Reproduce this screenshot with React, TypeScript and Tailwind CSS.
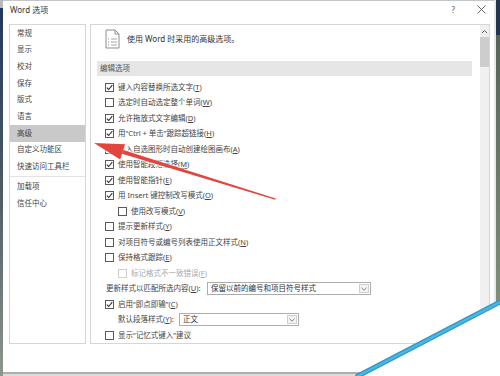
import type { ReactNode } from 'react'

type Opt = {
	label: string
	hotkey?: string
	checked?: boolean
	indent?: boolean
	disabled?: boolean
}

const navItems = ['常规', '显示', '校对', '保存', '版式', '语言', '高级', '自定义功能区', '快速访问工具栏']
const navItems2 = ['加载项', '信任中心']

const editOpts: Opt[] = [
	{ label: '键入内容替换所选文字', hotkey: 'T', checked: true },
	{ label: '选定时自动选定整个单词', hotkey: 'W' },
	{ label: '允许拖放式文字编辑', hotkey: 'D', checked: true },
	{ label: '用“Ctrl + 单击”跟踪超链接', hotkey: 'H', checked: true },
	{ label: '插入自选图形时自动创建绘图画布', hotkey: 'A' },
	{ label: '使用智能段落选择', hotkey: 'M', checked: true },
	{ label: '使用智能指针', hotkey: 'E', checked: true },
	{ label: '用 Insert 键控制改写模式', hotkey: 'O', checked: true },
	{ label: '使用改写模式', hotkey: 'V', indent: true },
	{ label: '提示更新样式', hotkey: 'Y' },
	{ label: '对项目符号或编号列表使用正文样式', hotkey: 'N' },
	{ label: '保持格式跟踪', hotkey: 'E' },
	{ label: '标记格式不一致错误', hotkey: 'F', indent: true, disabled: true },
]

function Label({ label, hotkey }: { label: string; hotkey?: string }) {
	if (!hotkey) return <span>{label}</span>
	return (
		<span>
			{label}(<span className="underline">{hotkey}</span>)
		</span>
	)
}

function CheckBox({ checked, disabled }: { checked?: boolean; disabled?: boolean }) {
	return (
		<div
			className={
				'w-[9px] h-[9px] border bg-white flex items-center justify-center shrink-0 ' +
				(disabled ? 'border-[#cfcfcf]' : 'border-[#5a5a5a]')
			}
		>
			{checked && (
				<svg width="7" height="7" viewBox="0 0 7 7">
					<path d="M0.8 3.6 L2.7 5.5 L6.3 1.2" fill="none" stroke="#333" strokeWidth="1.1" />
				</svg>
			)}
		</div>
	)
}

function OptRow({ opt }: { opt: Opt }) {
	return (
		<div className={'h-[15.5px] flex items-center gap-[4px] ' + (opt.indent ? 'pl-[27px]' : 'pl-[14px]')}>
			<CheckBox checked={opt.checked} disabled={opt.disabled} />
			<div className={'whitespace-nowrap ' + (opt.disabled ? 'text-[#a8a8a8]' : 'text-[#444]')}>
				<Label label={opt.label} hotkey={opt.hotkey} />
			</div>
		</div>
	)
}

function Select({ value, width }: { value: string; width: string }) {
	return (
		<div className={'h-[13px] border border-[#acacac] bg-white flex items-center pl-[3px] pr-[1px] shrink-0 ' + width}>
			<div className="flex-1 text-[#333] whitespace-nowrap leading-[11px]">{value}</div>
			<div className="w-[10px] h-[9px] border border-[#cfcfcf] bg-[#f3f3f3] flex items-center justify-center">
				<svg width="6" height="4" viewBox="0 0 6 4">
					<path d="M0.5 0.8 L3 3.2 L5.5 0.8" fill="none" stroke="#777" strokeWidth="0.9" />
				</svg>
			</div>
		</div>
	)
}

function DocIcon() {
	return (
		<svg width="15" height="20" viewBox="0 0 15 20">
			<path d="M1 1 H10 L14 5 V19 H1 Z" fill="#fff" stroke="#8d8d8d" strokeWidth="1" />
			<path d="M10 1 V5 H14" fill="none" stroke="#8d8d8d" strokeWidth="1" />
			<path d="M3 10 H4 M3 13 H4 M3 16 H4" stroke="#8d8d8d" strokeWidth="1" />
			<path d="M6 10 H12 M6 13 H12 M6 16 H12" stroke="#a5a5a5" strokeWidth="1" />
		</svg>
	)
}

function Overlay({ children }: { children: ReactNode }) {
	return (
		<svg className="absolute inset-0 pointer-events-none" width="500" height="376" viewBox="0 0 500 376">
			{children}
		</svg>
	)
}

export default function App() {
	return (
		<div className="relative w-[500px] h-[376px] overflow-hidden bg-white flex font-['Noto_Sans','Noto_Sans_CJK_SC',sans-serif] text-[7.5px] leading-none">
			{/* window edge behind the dialog */}
			<div className="w-[3px] flex flex-col">
				<div className="h-[8px] bg-[#b9b9b9]" />
				<div className="flex-1 bg-gradient-to-b from-[#23395a] via-[#4d5b66] to-[#8d978d]" />
			</div>

			<div className="flex-1 flex flex-col border-t border-[#c6c6c6]">
				{/* title bar */}
				<div className="h-[23px] flex items-center pl-[7px] pr-[8px] text-[8px] text-[#333]">
					<div className="flex-1 pb-[6px]">Word 选项</div>
					<div className="pb-[6px] mr-[22px] text-[#555]">?</div>
					<svg className="mb-[6px]" width="9" height="9" viewBox="0 0 9 9">
						<path d="M0.5 0.5 L8.5 8.5 M8.5 0.5 L0.5 8.5" stroke="#555" strokeWidth="0.9" />
					</svg>
				</div>

				{/* body */}
				<div className="h-[320px] flex gap-[4px] pl-[6px] pr-[4px]">
					<div className="w-[77px] border border-[#d6d6d6] flex flex-col text-[#444]">
						{navItems.map((n) => (
							<div
								key={n}
								className={'h-[16.67px] flex items-center pl-[7px] ' + (n === '高级' ? 'bg-[#c9c9c9]' : '')}
							>
								{n}
							</div>
						))}
						<div className="mt-[1px] mb-[2px] border-t border-[#e3e3e3]" />
						{navItems2.map((n) => (
							<div key={n} className="h-[16.67px] flex items-center pl-[7px]">
								{n}
							</div>
						))}
					</div>

					<div className="flex-1 border border-[#d6d6d6] flex overflow-hidden">
						<div className="flex-1 flex flex-col">
							<div className="mt-[4px] pl-[14px] flex items-center gap-[7px]">
								<DocIcon />
								<div className="text-[8px] text-[#333]">使用 Word 时采用的高级选项。</div>
							</div>

							<div className="mt-[12px] ml-[6px] mr-[8px] h-[16px] bg-[#e6e6e6] flex items-center pl-[3px] text-[#555]">
								编辑选项
							</div>

							<div className="mt-[4px] flex flex-col">
								{editOpts.map((o, i) => (
									<OptRow key={i} opt={o} />
								))}

								<div className="h-[15.5px] flex items-center pl-[15px] text-[#444]">
									<div className="w-[101px] shrink-0 whitespace-nowrap">
										更新样式以匹配所选内容(<span className="underline">U</span>):
									</div>
									<Select value="保留以前的编号和项目符号样式" width="w-[164px]" />
								</div>

								<OptRow opt={{ label: '启用“即点即输”', hotkey: 'C', checked: true }} />

								<div className="h-[15.5px] flex items-center pl-[27px] text-[#444]">
									<div className="w-[61px] shrink-0 whitespace-nowrap">
										默认段落样式(<span className="underline">Y</span>):
									</div>
									<Select value="正文" width="w-[120px]" />
								</div>

								<OptRow opt={{ label: '显示“记忆式键入”建议' }} />
							</div>
						</div>

						{/* scrollbar */}
						<div className="w-[9px] bg-[#f0f0f0] flex flex-col items-center">
							<svg className="mt-[4px]" width="7" height="5" viewBox="0 0 7 5">
								<path d="M1 4 L3.5 1.5 L6 4" fill="none" stroke="#606060" strokeWidth="1" />
							</svg>
							<div className="mt-[3px] w-full h-[30px] bg-[#cdcdcd]" />
						</div>
					</div>
				</div>

				<div className="flex-1" />
				<div className="h-[2px] bg-[#adadad]" />
				<div className="h-[2px] bg-[#dcdcdc]" />
			</div>

			<div className="w-[6px] flex">
				<div className="w-[2px] bg-[#e8e8e8]" />
				<div className="flex-1 flex flex-col">
					<div className="h-[35px] bg-[#22354f]" />
					<div className="flex-1 bg-gradient-to-b from-[#566457] to-[#8c9a86]" />
				</div>
			</div>

			{/* red annotation arrow */}
			<Overlay>
				<g stroke="#fff" strokeOpacity="0.55" strokeWidth="3" strokeLinejoin="round" fill="none">
					<polygon points="122,153.8 123.2,150 275.7,198.6 275.3,199.8" />
					<polygon points="94,143 120.2,159.5 125,144.3" />
				</g>
				<polygon points="122,153.8 123.2,150 275.7,198.6 275.3,199.8" fill="#e2453d" />
				<polygon points="94,143 120.2,159.5 125,144.3" fill="#e2453d" />
			</Overlay>

			{/* blue corner band */}
			<Overlay>
				<polygon points="358,376 500,302 500,376" fill="#fff" />
				<line x1="356" y1="377" x2="502" y2="301" stroke="#2c98c8" strokeWidth="5" />
				<line x1="356" y1="377" x2="502" y2="301" stroke="#4db6e0" strokeWidth="2.5" />
			</Overlay>
		</div>
	)
}
